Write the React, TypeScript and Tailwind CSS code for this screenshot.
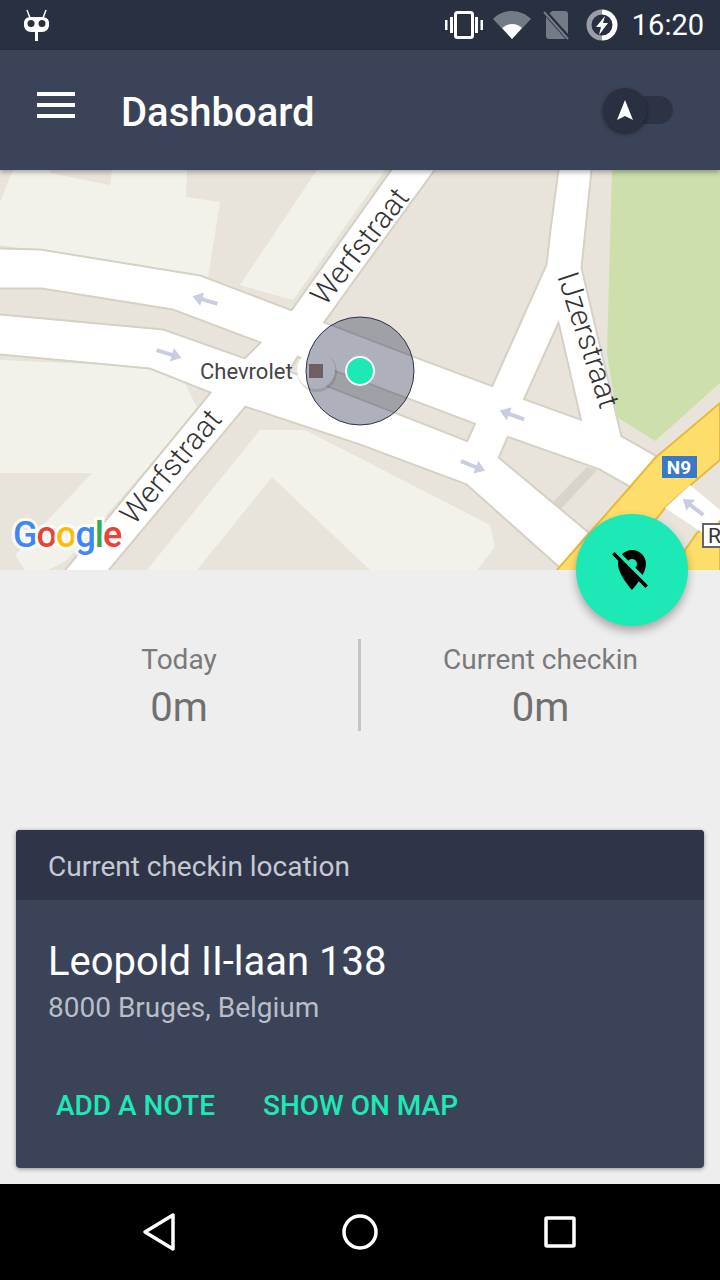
const font = { fontFamily: 'Roboto, sans-serif' };

const ROADS = [
  '0,250 40,251 200,277 292,312 322,323 413,358 493,388 522,400 583,422 620,437 655,457 630,485 600,468 507,435 477,423 297,355 263,342 173,308 42,287 0,287',
  '0,316 163,331 248,361 287,372 468,443 497,458 587,533 560,566 467,483 360,443 245,405 213,392 150,367 0,353',
  '477,423 507,435 497,458 468,443',
  '393,170 433,170 360,270 322,323 297,355 287,372 245,405 107,570 67,570 213,392 263,342 292,312',
  '560,170 590,170 580,268 620,437 583,422 559,318 522,400 493,388 548,265 552,230',
];

const LIGHT_BLOCKS = [
  '13,170 50,170 50,173 110,185 112,170 187,170 186,197 220,202 208,278 197,277 40,251 0,245 0,202',
  '317,170 385,170 293,300 240,285',
  '0,360 150,367 185,383 198,410 67,560 48,570 15,570 0,560',
  '260,430 305,430 490,525 495,547 477,570 370,570 272,477 197,570 147,570',
];

function Arrow({ x, y, angle }: { x: number; y: number; angle: number }) {
  return (
    <g transform={`translate(${x} ${y}) rotate(${angle})`} fill="#c9cde0">
      <rect x="-13" y="-2" width="17" height="4" />
      <polygon points="13,0 3,-7 3,7" />
    </g>
  );
}

function MapCanvas() {
  return (
    <svg viewBox="0 170 720 400" className="block w-[720px] h-[400px]">
      <rect x="0" y="170" width="720" height="400" fill="#e8e4dc" />
      {LIGHT_BLOCKS.map((p) => (
        <polygon key={p} points={p} fill="#f3f2ea" />
      ))}
      <polygon points="0,473 92,473 15,555 25,570 0,570" fill="#e8e4dc" />
      <polygon points="612,170 720,170 720,383 655,441 617,417 607,353" fill="#cddfab" />
      <polygon points="587,467 552,503 560,510 597,470" fill="#d9d4ca" />
      {ROADS.map((p) => (
        <polygon key={p} points={p} fill="#fff" stroke="#d6d1c5" strokeWidth="5" />
      ))}
      {ROADS.map((p) => (
        <polygon key={p} points={p} fill="#fff" stroke="#fff" strokeWidth="1" />
      ))}
      {/* N9 */}
      <g fill="#fdde6a" stroke="#e8b93c" strokeWidth="2">
        <polygon points="655,458 720,403 720,460 693,483 665,508 657,518 560,620 500,620 557,570 630,487" />
        <polygon points="720,515 697,533 685,550 680,600 720,600" />
      </g>
      <polygon points="665,508 690,485 720,510 720,520 703,533" fill="#fff" />
      <Arrow x={205} y={300} angle={197} />
      <Arrow x={169} y={354} angle={17} />
      <Arrow x={512} y={415} angle={200} />
      <Arrow x={473} y={466} angle={22} />
      <Arrow x={693} y={507} angle={218} />

      <g fontFamily="Roboto, sans-serif" fontWeight="300" fontSize="30" fill="#333">
        <text transform="translate(325 307) rotate(-52)">Werfstraat</text>
        <text transform="translate(134 526) rotate(-50)">Werfstraat</text>
        <text transform="translate(557 276) rotate(72)">IJzerstraat</text>
      </g>
      <text x="200" y="379" fontFamily="Roboto, sans-serif" fontSize="22" fill="#444">Chevrolet</text>

      <circle cx="317" cy="372" r="20" fill="#000" fillOpacity="0.12" />
      <circle cx="316" cy="370" r="19" fill="#fff" />
      <circle cx="360" cy="371" r="54" fill="#343957" fillOpacity="0.4" stroke="#2f3449" strokeWidth="1" />
      <rect x="309" y="364" width="14" height="14" fill="#6f5f62" />
      <circle cx="360" cy="371" r="14" fill="#1de9b6" stroke="#fff" strokeWidth="2" />

      <rect x="662" y="456" width="35" height="22" fill="#3c78c8" />
      <text x="679" y="474" textAnchor="middle" fontFamily="Roboto, sans-serif" fontWeight="700" fontSize="19" fill="#fff">N9</text>
      <rect x="703" y="524" width="24" height="23" fill="#fff" stroke="#666" strokeWidth="2" />
      <text x="708" y="543" fontFamily="Roboto, sans-serif" fontSize="21" fill="#333">R</text>

      <text
        x="13"
        y="547"
        fontFamily="Roboto, sans-serif"
        fontWeight="500"
        fontSize="36"
        letterSpacing="-1"
        stroke="#ffffff"
        strokeWidth="6"
        strokeOpacity="0.8"
        paintOrder="stroke"
      >
        <tspan fill="#4285f4">G</tspan>
        <tspan fill="#ea4335">o</tspan>
        <tspan fill="#fbbc05">o</tspan>
        <tspan fill="#4285f4">g</tspan>
        <tspan fill="#34a853">l</tspan>
        <tspan fill="#ea4335">e</tspan>
      </text>
    </svg>
  );
}

function StatusBar() {
  return (
    <div className="h-[50px] shrink-0 bg-[#293042] flex items-center pl-[23px] pr-[16px]">
      <svg width="28" height="36" viewBox="0 0 28 36">
        <path d="M4 3l3 8M23 3l-3 8" stroke="#fff" strokeWidth="1.500" />
        <path d="M8 10h11c4 0 7 2 7 6v2c0 4-3 7-7 7H8c-4 0-7-3-7-7v-2c0-4 3-6 7-6z" fill="#fff" />
        <circle cx="8" cy="16.500" r="3.500" fill="#293042" />
        <circle cx="19" cy="16.500" r="3.500" fill="#293042" />
        <rect x="12" y="25" width="3" height="9" fill="#fff" />
      </svg>
      <div className="flex-1" />
      <svg width="38" height="28" viewBox="0 0 38 28" fill="#fff">
        <rect x="10.500" y="1.500" width="17" height="25" rx="2" fill="none" stroke="#fff" strokeWidth="3" />
        <rect x="5" y="6" width="3" height="16" />
        <rect x="30" y="6" width="3" height="16" />
        <rect x="0" y="9" width="2.500" height="10" />
        <rect x="35.500" y="9" width="2.500" height="10" />
      </svg>
      <svg width="38" height="28" viewBox="0 0 38 28" className="ml-[10px]">
        <path d="M0 8C5 3 12 0 19 0s14 3 19 8L19 28z" fill="#757a87" />
        <path d="M9 17c3-2.500 6-4 10-4s7 1.500 10 4L19 28z" fill="#fff" />
      </svg>
      <svg width="27" height="30" viewBox="0 0 27 30" className="ml-[12px]">
        <path d="M9 1h13c2 0 3 1 3 3v23c0 1-1 2-2 2H6c-2 0-3-1-3-3V7z" fill="#757a87" />
        <path d="M1 1l25 28" stroke="#293042" strokeWidth="5" />
        <path d="M1 2l24 27" stroke="#757a87" strokeWidth="2" />
      </svg>
      <svg width="32" height="32" viewBox="0 0 32 32" className="ml-[16px]">
        <path d="M16 3a13 13 0 0 0 0 26" fill="none" stroke="#9a9ea9" strokeWidth="5" />
        <path d="M16 3a13 13 0 0 1 0 26" fill="none" stroke="#fff" strokeWidth="5" />
        <path d="M19 7l-9 11h5l-2 8 9-12h-5z" fill="#fff" />
      </svg>
      <span className="ml-[14px] text-[29px] leading-none text-white" style={font}>16:20</span>
    </div>
  );
}

function AppBar() {
  return (
    <div className="relative z-10 h-[120px] shrink-0 bg-[#3b4359] shadow-[0_2px_5px_rgba(0,0,0,0.35)] flex items-center pl-[37px] pr-[47px]">
      <div className="flex flex-col gap-[7px] w-[38px] mt-[-10px]">
        <div className="h-[4px] bg-white" />
        <div className="h-[4px] bg-white" />
        <div className="h-[4px] bg-white" />
      </div>
      <h1 className="ml-[46px] mt-[6px] text-[40px] leading-none font-medium text-white" style={font}>Dashboard</h1>
      <div className="flex-1" />
      <div className="relative w-[70px] h-[44px] flex items-center justify-end">
        <div className="w-[40px] h-[28px] rounded-full bg-[#2d3345]" />
        <div className="absolute left-0 top-0 w-[44px] h-[44px] rounded-full bg-[#2a3042] shadow-[0_2px_4px_rgba(0,0,0,0.45)] flex items-center justify-center">
          <svg width="16" height="20" viewBox="0 0 16 20">
            <path d="M8 0l8 20-8-4-8 4z" fill="#fff" />
          </svg>
        </div>
      </div>
    </div>
  );
}

function Stat({ label, className }: { label: string; className: string }) {
  return (
    <div className={`flex flex-col items-center pt-[2px] ${className}`} style={font}>
      <span className="text-[28px] leading-[38px] text-[#7a7a7a]">{label}</span>
      <span className="text-[40px] leading-[58px] text-[#707070]">0m</span>
    </div>
  );
}

export default function App() {
  return (
    <div className="w-[720px] h-[1280px] flex flex-col overflow-hidden bg-[#eeeeee]" style={font}>
      <StatusBar />
      <AppBar />
      <div className="relative h-[400px] shrink-0">
        <MapCanvas />
        <button className="absolute left-[576px] top-[344px] w-[112px] h-[112px] rounded-full bg-[#1de9b6] shadow-[0_5px_10px_rgba(0,0,0,0.3)] flex items-center justify-center">
          <svg width="48" height="48" viewBox="0 0 24 24" fill="#000">
            <path d="M12 6.500c1.380 0 2.500 1.120 2.500 2.500 0 .74-.33 1.390-.83 1.850l3.630 3.630c.98-1.860 1.700-3.800 1.700-5.480 0-3.870-3.130-7-7-7-1.980 0-3.760.83-5.040 2.150l3.190 3.190c.46-.52 1.110-.84 1.850-.84zm4.370 9.600l-4.630-4.630-.11-.11L3.270 3 2 4.270l3.180 3.180C5.070 7.950 5 8.470 5 9c0 5.250 7 13 7 13s1.670-1.850 3.380-4.350L18.730 21 20 19.730l-3.630-3.630z" />
          </svg>
        </button>
      </div>

      <div className="flex items-start h-[92px] mt-[69px] shrink-0">
        <Stat label="Today" className="w-[358px]" />
        <div className="w-[3px] h-[92px] bg-[#c4c4c4]" />
        <Stat label="Current checkin" className="flex-1" />
      </div>

      <div className="mx-[16px] mt-[99px] h-[338px] shrink-0 rounded-[4px] overflow-hidden bg-[#3b4359] shadow-[0_1px_4px_rgba(0,0,0,0.4)]">
        <div className="h-[70px] bg-[#2f3449] flex items-center pl-[32px] pt-[3px] text-[28px] text-[#c6c9d2]">
          Current checkin location
        </div>
        <div className="pl-[32px] pt-[37px]">
          <div className="text-[40px] leading-[50px] text-white">Leopold II-laan 138</div>
          <div className="text-[28px] leading-[41px] text-[#b9bdc8]">8000 Bruges, Belgium</div>
          <div className="flex gap-[48px] mt-[58px] pl-[8px] text-[28px] leading-[40px] font-medium text-[#1de9b6]">
            <span>ADD A NOTE</span>
            <span>SHOW ON MAP</span>
          </div>
        </div>
      </div>

      <div className="mt-auto h-[96px] shrink-0 bg-black flex items-center justify-between pl-[141px] pr-[144px]">
        <svg width="36" height="40" viewBox="0 0 36 40">
          <path d="M32 3v34L4 20z" fill="none" stroke="#fff" strokeWidth="3.500" strokeLinejoin="round" />
        </svg>
        <svg width="36" height="36" viewBox="0 0 36 36" className="ml-[-2px]">
          <circle cx="18" cy="18" r="16" fill="none" stroke="#fff" strokeWidth="3.500" />
        </svg>
        <svg width="32" height="32" viewBox="0 0 32 32">
          <rect x="2" y="2" width="28" height="28" rx="1" fill="none" stroke="#fff" strokeWidth="3.500" />
        </svg>
      </div>
    </div>
  );
}
